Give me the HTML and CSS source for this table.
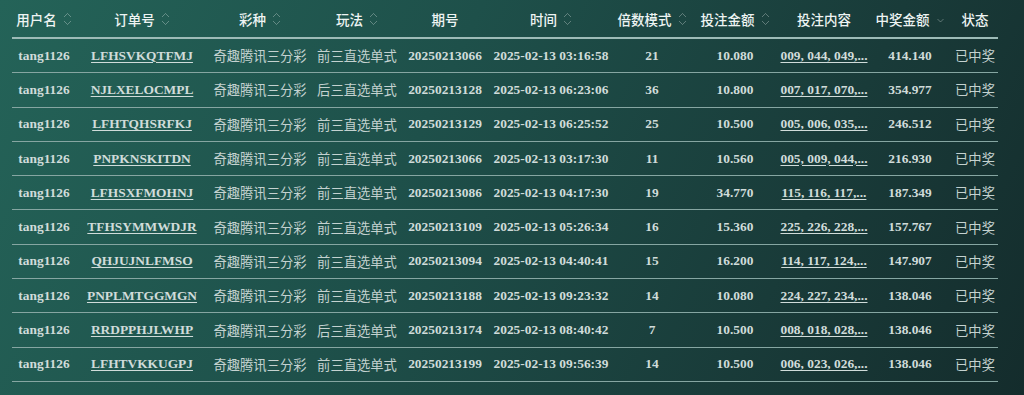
FILE: index.html
```html
<!DOCTYPE html>
<html lang="zh-CN">
<head>
<meta charset="utf-8">
<title>订单列表</title>
<link rel="stylesheet" href="styles.css">
</head>
<body>
<div class="page">
<table class="orders">
<colgroup>
<col class="c-user"><col class="c-order"><col class="c-lottery"><col class="c-play"><col class="c-issue"><col class="c-time"><col class="c-mult"><col class="c-amount"><col class="c-content"><col class="c-prize"><col class="c-status">
</colgroup>
<thead>
<tr>
<th><span class="th">用户名<svg class="sort" viewBox="0 0 9 18"><path d="M1 7 L4.5 3.5 L8 7"/><path d="M1 11 L4.5 14.5 L8 11"/></svg></span></th>
<th><span class="th">订单号<svg class="sort" viewBox="0 0 9 18"><path d="M1 7 L4.5 3.5 L8 7"/><path d="M1 11 L4.5 14.5 L8 11"/></svg></span></th>
<th><span class="th">彩种<svg class="sort" viewBox="0 0 9 18"><path d="M1 7 L4.5 3.5 L8 7"/><path d="M1 11 L4.5 14.5 L8 11"/></svg></span></th>
<th><span class="th">玩法<svg class="sort" viewBox="0 0 9 18"><path d="M1 7 L4.5 3.5 L8 7"/><path d="M1 11 L4.5 14.5 L8 11"/></svg></span></th>
<th><span class="th">期号</span></th>
<th><span class="th">时间<svg class="sort" viewBox="0 0 9 18"><path d="M1 7 L4.5 3.5 L8 7"/><path d="M1 11 L4.5 14.5 L8 11"/></svg></span></th>
<th><span class="th">倍数模式<svg class="sort" viewBox="0 0 9 18"><path d="M1 7 L4.5 3.5 L8 7"/><path d="M1 11 L4.5 14.5 L8 11"/></svg></span></th>
<th><span class="th">投注金额<svg class="sort" viewBox="0 0 9 18"><path d="M1 7 L4.5 3.5 L8 7"/><path d="M1 11 L4.5 14.5 L8 11"/></svg></span></th>
<th><span class="th">投注内容</span></th>
<th><span class="th">中奖金额<svg class="sort" viewBox="0 0 9 18"><path d="M1.5 9 L4.5 12 L7.5 9"/></svg></span></th>
<th><span class="th">状态</span></th>
</tr>
</thead>
<tbody>
<tr><td class="num">tang1126</td><td class="num"><a class="link">LFHSVKQTFMJ</a></td><td class="cn">奇趣腾讯三分彩</td><td class="cn">前三直选单式</td><td class="num">20250213066</td><td class="num">2025-02-13 03:16:58</td><td class="num">21</td><td class="num">10.080</td><td class="num"><a class="link">009, 044, 049,...</a></td><td class="num">414.140</td><td class="cn">已中奖</td></tr>
<tr><td class="num">tang1126</td><td class="num"><a class="link">NJLXELOCMPL</a></td><td class="cn">奇趣腾讯三分彩</td><td class="cn">后三直选单式</td><td class="num">20250213128</td><td class="num">2025-02-13 06:23:06</td><td class="num">36</td><td class="num">10.800</td><td class="num"><a class="link">007, 017, 070,...</a></td><td class="num">354.977</td><td class="cn">已中奖</td></tr>
<tr><td class="num">tang1126</td><td class="num"><a class="link">LFHTQHSRFKJ</a></td><td class="cn">奇趣腾讯三分彩</td><td class="cn">前三直选单式</td><td class="num">20250213129</td><td class="num">2025-02-13 06:25:52</td><td class="num">25</td><td class="num">10.500</td><td class="num"><a class="link">005, 006, 035,...</a></td><td class="num">246.512</td><td class="cn">已中奖</td></tr>
<tr><td class="num">tang1126</td><td class="num"><a class="link">PNPKNSKITDN</a></td><td class="cn">奇趣腾讯三分彩</td><td class="cn">前三直选单式</td><td class="num">20250213066</td><td class="num">2025-02-13 03:17:30</td><td class="num">11</td><td class="num">10.560</td><td class="num"><a class="link">005, 009, 044,...</a></td><td class="num">216.930</td><td class="cn">已中奖</td></tr>
<tr><td class="num">tang1126</td><td class="num"><a class="link">LFHSXFMOHNJ</a></td><td class="cn">奇趣腾讯三分彩</td><td class="cn">前三直选单式</td><td class="num">20250213086</td><td class="num">2025-02-13 04:17:30</td><td class="num">19</td><td class="num">34.770</td><td class="num"><a class="link">115, 116, 117,...</a></td><td class="num">187.349</td><td class="cn">已中奖</td></tr>
<tr><td class="num">tang1126</td><td class="num"><a class="link">TFHSYMMWDJR</a></td><td class="cn">奇趣腾讯三分彩</td><td class="cn">前三直选单式</td><td class="num">20250213109</td><td class="num">2025-02-13 05:26:34</td><td class="num">16</td><td class="num">15.360</td><td class="num"><a class="link">225, 226, 228,...</a></td><td class="num">157.767</td><td class="cn">已中奖</td></tr>
<tr><td class="num">tang1126</td><td class="num"><a class="link">QHJUJNLFMSO</a></td><td class="cn">奇趣腾讯三分彩</td><td class="cn">前三直选单式</td><td class="num">20250213094</td><td class="num">2025-02-13 04:40:41</td><td class="num">15</td><td class="num">16.200</td><td class="num"><a class="link">114, 117, 124,...</a></td><td class="num">147.907</td><td class="cn">已中奖</td></tr>
<tr><td class="num">tang1126</td><td class="num"><a class="link">PNPLMTGGMGN</a></td><td class="cn">奇趣腾讯三分彩</td><td class="cn">前三直选单式</td><td class="num">20250213188</td><td class="num">2025-02-13 09:23:32</td><td class="num">14</td><td class="num">10.080</td><td class="num"><a class="link">224, 227, 234,...</a></td><td class="num">138.046</td><td class="cn">已中奖</td></tr>
<tr><td class="num">tang1126</td><td class="num"><a class="link">RRDPPHJLWHP</a></td><td class="cn">奇趣腾讯三分彩</td><td class="cn">后三直选单式</td><td class="num">20250213174</td><td class="num">2025-02-13 08:40:42</td><td class="num">7</td><td class="num">10.500</td><td class="num"><a class="link">008, 018, 028,...</a></td><td class="num">138.046</td><td class="cn">已中奖</td></tr>
<tr><td class="num">tang1126</td><td class="num"><a class="link">LFHTVKKUGPJ</a></td><td class="cn">奇趣腾讯三分彩</td><td class="cn">前三直选单式</td><td class="num">20250213199</td><td class="num">2025-02-13 09:56:39</td><td class="num">14</td><td class="num">10.500</td><td class="num"><a class="link">006, 023, 026,...</a></td><td class="num">138.046</td><td class="cn">已中奖</td></tr>
</tbody>
</table>
</div>
</body>
</html>
```
FILE: styles.css
```css
html, body {
  margin: 0;
  padding: 0;
  height: 100%;
}
body {
  background: linear-gradient(115deg, #246358 0%, #1e504a 40%, #193b39 75%, #142c2c 100%);
  color: #d6e1df;
  overflow: hidden;
}
.page {
  padding: 0 26px 0 12px;
}
.orders {
  width: 986px;
  border-collapse: collapse;
  table-layout: fixed;
}
.c-user { width: 64px; }
.c-order { width: 132px; }
.c-lottery { width: 104px; }
.c-play { width: 90px; }
.c-issue { width: 86px; }
.c-time { width: 126px; }
.c-mult { width: 76px; }
.c-amount { width: 90px; }
.c-content { width: 88px; }
.c-prize { width: 84px; }
.c-status { width: 46px; }

.orders th {
  height: 37px;
  padding: 0;
  text-align: center;
  font-family: "Noto Sans CJK SC", "Noto Sans", sans-serif;
  font-size: 13.5px;
  font-weight: 500;
  color: #eef4f3;
  border-bottom: 2px solid #9dbbb7;
  white-space: nowrap;
}
.th {
  display: inline-flex;
  align-items: center;
  gap: 6px;
}
.sort {
  width: 9px;
  height: 18px;
  fill: none;
  stroke: rgba(255, 255, 255, 0.3);
  stroke-width: 1;
}
.orders td {
  height: 33.3px;
  padding: 0;
  text-align: center;
  white-space: nowrap;
  border-bottom: 1px solid #86a6a2;
}
.num {
  font-family: "Liberation Serif", "DejaVu Serif", serif;
  font-weight: 700;
  font-size: 13.4px;
  color: #d0dcda;
}
.cn {
  font-family: "Noto Sans CJK SC", "Noto Sans", sans-serif;
  font-size: 13.3px;
  color: #c4d2d0;
}
.link {
  color: #d0dcda;
  text-decoration: underline;
  text-underline-offset: 2px;
}
```
